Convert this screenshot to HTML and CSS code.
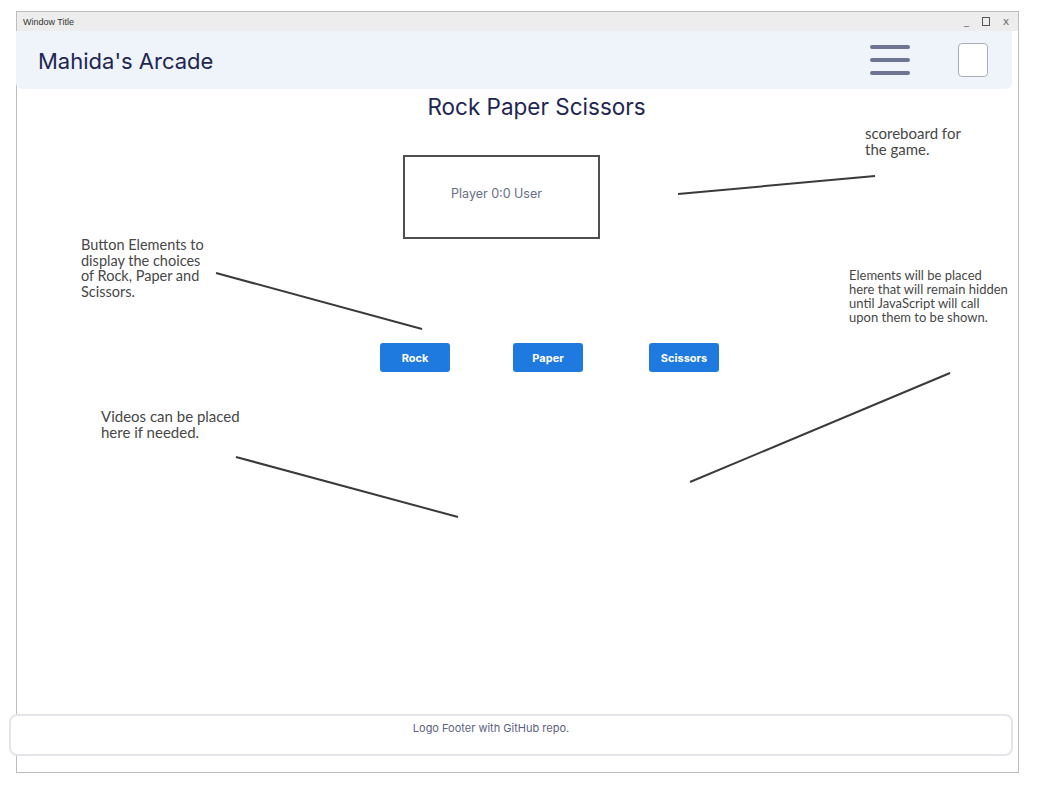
FILE: index.html
```html
<!DOCTYPE HTML>
<html>
    <head>
        <title>Mahida's Arcade</title>
        <meta charset="utf-8" />
        <meta name="viewport" content="width=device-width, initial-scale=1" />
        <link rel="stylesheet" href="styles.css">
    </head>
    <body>
        <div class="window">
            <div class="titlebar">
                <span class="titlebar-name">Window Title</span>
                <span class="titlebar-controls">
                    <span>_</span>
                    <span class="max-box"></span>
                    <span>X</span>
                </span>
            </div>

            <header class="site-header">
                <h1 class="brand">Mahida's Arcade</h1>
                <div class="header-tools">
                    <div class="hamburger">
                        <span></span>
                        <span></span>
                        <span></span>
                    </div>
                    <div class="toggle-box"></div>
                </div>
            </header>

            <main class="game">
                <h2 class="game-title">Rock Paper Scissors</h2>
                <div class="scoreboard">Player 0:0 User</div>
                <div class="choices">
                    <button class="choice">Rock</button>
                    <button class="choice">Paper</button>
                    <button class="choice">Scissors</button>
                </div>
            </main>

            <footer class="site-footer">Logo Footer with GitHub repo.</footer>

            <!-- wireframe notes -->
            <p class="note note-score">scoreboard for<br>the game.</p>
            <p class="note note-buttons">Button Elements to<br>display the choices<br>of Rock, Paper and<br>Scissors.</p>
            <p class="note note-hidden">Elements will be placed<br>here that will remain hidden<br>until JavaScript will call<br>upon them to be shown.</p>
            <p class="note note-videos">Videos can be placed<br>here if needed.</p>

            <svg class="pointers" width="1000" height="760" viewBox="0 0 1000 760">
                <line x1="661" y1="182" x2="858" y2="164" />
                <line x1="199" y1="261" x2="405" y2="317" />
                <line x1="219" y1="445" x2="441" y2="505" />
                <line x1="673" y1="470" x2="933" y2="361" />
            </svg>
        </div>
    </body>
</html>
```

FILE: styles.css
```css
body {
    margin: 0;
    background-color: #fff;
    font-family: Inter, "Noto Sans", sans-serif;
}

.window {
    position: relative;
    box-sizing: border-box;
    margin: 11px 0 0 16px;
    width: 1003px;
    height: 762px;
    border: 1px solid #bdbdbd;
    display: flex;
    flex-direction: column;
}

.titlebar {
    height: 19px;
    background-color: #ededed;
    display: flex;
    align-items: center;
    justify-content: space-between;
    padding: 0 9px 0 6px;
    font-family: "Liberation Sans", sans-serif;
    font-size: 9px;
    color: #333;
}

.titlebar-controls {
    display: flex;
    align-items: center;
    gap: 13px;
    color: #555;
}

.max-box {
    width: 6px;
    height: 7px;
    border: 1px solid #555;
}

.site-header {
    height: 58px;
    margin: 0 6px 0 -1px;
    padding: 0 24px 0 22px;
    background-color: #eff4fb;
    border-radius: 0 0 6px 6px;
    display: flex;
    align-items: center;
    justify-content: space-between;
}

.brand {
    margin: 0 0 -2px;
    font-size: 22px;
    font-weight: 400;
    color: #1e2652;
}

.header-tools {
    display: flex;
    align-items: center;
    gap: 48px;
}

.hamburger {
    display: flex;
    flex-direction: column;
    gap: 9px;
    width: 40px;
}

.hamburger span {
    height: 4px;
    border-radius: 2px;
    background-color: #6e7591;
}

.toggle-box {
    box-sizing: border-box;
    width: 30px;
    height: 34px;
    border: 1px solid #a9adb8;
    border-radius: 4px;
    background-color: #fff;
}

.game {
    display: flex;
    flex-direction: column;
}

.game-title {
    margin: 5px 0 0 38px;
    text-align: center;
    font-size: 22.5px;
    line-height: 26px;
    font-weight: 400;
    color: #1e2652;
}

.scoreboard {
    box-sizing: border-box;
    margin: 35px 0 0 386px;
    width: 197px;
    height: 84px;
    padding: 0 10px 7px 0;
    border: 2px solid #4f4f4f;
    display: flex;
    align-items: center;
    justify-content: center;
    font-size: 12.5px;
    color: #666d85;
}

.choices {
    display: flex;
    gap: 63px;
    margin: 104px 0 0 363px;
}

.choice {
    width: 70px;
    height: 29px;
    border: none;
    border-radius: 3px;
    background-color: #1f7ae0;
    color: #fff;
    font-family: Inter, "Noto Sans", sans-serif;
    font-size: 11px;
    font-weight: 700;
    cursor: pointer;
}

.choice + .choice + .choice {
    margin-left: 3px;
}

.site-footer {
    box-sizing: border-box;
    margin: auto 5px 16px -8px;
    height: 42px;
    padding: 5px 40px 0 0;
    border: 2px solid #e3e5ea;
    border-radius: 8px;
    background-color: #fff;
    text-align: center;
    font-size: 11px;
    color: #5b6282;
}

.note {
    position: absolute;
    margin: 0;
    font-family: Lato, "Noto Sans", sans-serif;
    font-size: 15px;
    line-height: 16px;
    color: #474747;
}

.note-score {
    left: 848px;
    top: 113px;
}

.note-buttons {
    left: 64px;
    top: 225px;
    font-size: 14.5px;
    line-height: 15.6px;
}

.note-hidden {
    left: 832px;
    top: 256px;
    font-size: 13px;
    line-height: 14px;
}

.note-videos {
    left: 84px;
    top: 396px;
}

.pointers {
    position: absolute;
    left: 0;
    top: 0;
    pointer-events: none;
}

.pointers line {
    stroke: #3a3a3a;
    stroke-width: 2;
}
```
